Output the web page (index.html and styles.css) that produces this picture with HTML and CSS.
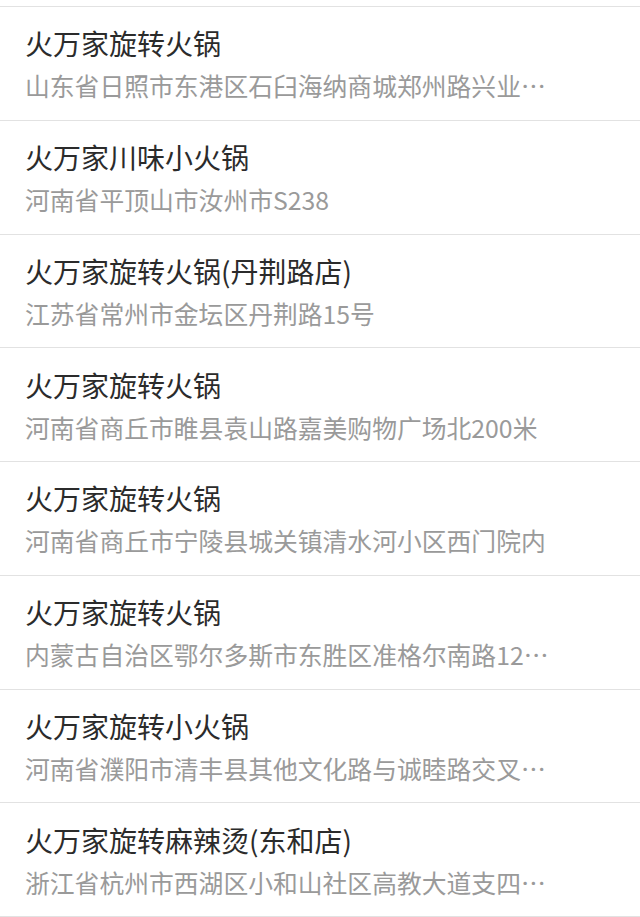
FILE: index.html
```html
<html lang="zh-CN">
    <head>
        <meta charset="utf-8" />
        <title>门店列表</title>
        <link rel="stylesheet" href="styles.css">
    </head>
    <body>
        <div class="list">
            <div class="item">
                <div class="name">火万家旋转火锅</div>
                <div class="addr">山东省日照市东港区石臼海纳商城郑州路兴业⋯</div>
            </div>
            <div class="item">
                <div class="name">火万家川味小火锅</div>
                <div class="addr">河南省平顶山市汝州市S238</div>
            </div>
            <div class="item">
                <div class="name">火万家旋转火锅(丹荆路店)</div>
                <div class="addr">江苏省常州市金坛区丹荆路15号</div>
            </div>
            <div class="item">
                <div class="name">火万家旋转火锅</div>
                <div class="addr">河南省商丘市睢县袁山路嘉美购物广场北200米</div>
            </div>
            <div class="item">
                <div class="name">火万家旋转火锅</div>
                <div class="addr">河南省商丘市宁陵县城关镇清水河小区西门院内</div>
            </div>
            <div class="item">
                <div class="name">火万家旋转火锅</div>
                <div class="addr">内蒙古自治区鄂尔多斯市东胜区准格尔南路12⋯</div>
            </div>
            <div class="item">
                <div class="name">火万家旋转小火锅</div>
                <div class="addr">河南省濮阳市清丰县其他文化路与诚睦路交叉⋯</div>
            </div>
            <div class="item">
                <div class="name">火万家旋转麻辣烫(东和店)</div>
                <div class="addr">浙江省杭州市西湖区小和山社区高教大道支四⋯</div>
            </div>
        </div>
    </body>
</html>
```

FILE: styles.css
```css
body{
    margin: 0;
    background: #ffffff;
    font-family: "Noto Sans CJK SC", "Noto Sans", sans-serif;
}
.list{
    padding-top: 6px;
    border-bottom: 1px solid #e2e2e2;
}
.item{
    box-sizing: border-box;
    height: 113.75px;
    border-top: 1px solid #e2e2e2;
    padding-left: 25px;
    display: flex;
    flex-direction: column;
    justify-content: center;
    gap: 4px;
}
.name{
    font-size: 28px;
    line-height: 40px;
    color: #2b2b2b;
    white-space: nowrap;
}
.addr{
    font-size: 24.8px;
    line-height: 36px;
    color: #9a9a9a;
    white-space: nowrap;
}
```
